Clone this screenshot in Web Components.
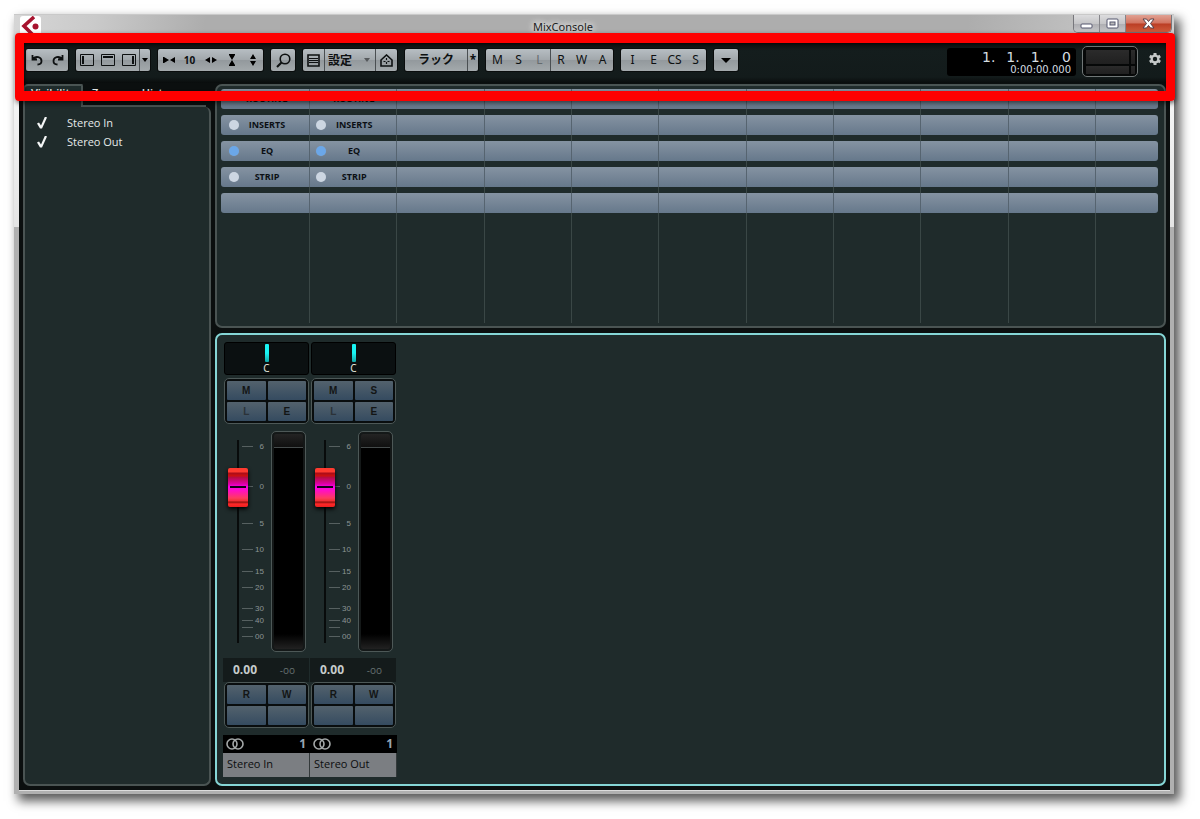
<!DOCTYPE html>
<html lang="ja">
<head>
<meta charset="utf-8">
<title>MixConsole</title>
<style>
  html, body { margin: 0; background: #fff; }
  body { font: 11px/16px "Open Sans", "Noto Sans", "Noto Sans CJK JP", sans-serif; color: #0c1012; }
</style>
</head>
<body>
<mix-console></mix-console>

<script>
const BASE = `
  *, *::before, *::after { box-sizing: border-box; }
  button, select, input { margin: 0; padding: 0; border: 0; border-radius: 0; background: none; color: inherit; font: inherit; appearance: none; }
  svg { display: block; flex: none; }
`;

function define(name, css, html) {
  customElements.define(name, class extends HTMLElement {
    connectedCallback() {
      if (this.shadowRoot) return;
      const markup = typeof html === 'function' ? html(this) : html;
      this.attachShadow({ mode: 'open' }).innerHTML = `<style>${BASE}${css}</style>${markup}`;
    }
  });
}

/* Window title bar */
define('title-bar', `
  :host { display: flex; align-items: flex-start; height: 29px; padding: 0 2px 0 6px; flex: none;
    background: linear-gradient(100deg, #d6d6d6 0, #cacaca 80px, #adadad 190px, #adadad 82%, #d0d0d0 100%);
    border-top: 1px solid #c9c9c9; }
  .logo { width: 21px; height: 19px; margin-top: 1px; background: #fff; border-radius: 3px; }
  h1 { flex: 1; margin: 0; padding-left: 12px; text-align: center; font: 11px/24px "Noto Sans", sans-serif; color: #1b1b1b;
    text-shadow: 0 0 6px #fff, 0 0 8px #fff; }
  .controls { display: flex; height: 18px; border: 1px solid #77777c; border-top: 0; border-radius: 0 0 5px 5px; overflow: hidden; }
  button { display: grid; place-items: center; width: 26px; background: linear-gradient(#dcdcde, #c6c6c8 50%, #adadb1 51%, #c6c6c8); border-right: 1px solid #85858a; }
  .close { width: 45px; border: 0; background: linear-gradient(#e0a193, #d2735f 48%, #bb3d24 52%, #cf5c3c); }
`, `
  <svg class="logo" viewBox="0 0 21 19"><path d="M14 1 4 10l9 9" fill="none" stroke="#a8142f" stroke-width="3.6"/><circle cx="15.500" cy="10.500" r="3" fill="#a8142f"/></svg>
  <h1>MixConsole</h1>
  <div class="controls">
    <button aria-label="Minimize"><svg width="13" height="14"><rect x="1" y="7" width="11" height="4" rx="1" fill="#fff" stroke="#55566e"/></svg></button>
    <button aria-label="Maximize"><svg width="13" height="12"><rect x="1" y="1" width="11" height="9" rx="1" fill="#fff" stroke="#55566e"/><rect x="4" y="4" width="5" height="3" fill="#bbb" stroke="#55566e"/></svg></button>
    <button class="close" aria-label="Close"><svg width="13" height="12"><path d="M1 1h3.500l2 2.500 2-2.500H12L8.500 5.500 12 10H8.500l-2-2.500-2 2.500H1l3.500-4.500z" fill="#fff" stroke="#55404a"/></svg></button>
  </div>
`);

/* Raised group of toolbar buttons */
define('tool-group', `
  :host { display: flex; height: 22px; flex: none; border-radius: 2px; overflow: hidden; color: #0d1011;
    background: linear-gradient(#b7bec3, #a1a7ab 50%, #93999d 52%, #a3a9ac); box-shadow: 0 0 0 1px #0a0d0d; }
  :host([letters]) { padding-left: 1px; }
`, `<slot></slot>`);

define('tool-button', `
  :host { display: flex; width: 21px; flex: none; }
  :host([wide]) { width: 62px; }
  :host([medium]) { width: 24px; }
  :host([slim]) { width: 11px; }
  :host([split]) { border-left: 1px solid #4a4f52; }
  :host([dim]) { color: #656b6e; }
  button { display: grid; place-items: center; flex: 1; min-width: 0; font: 12px/20px "Noto Sans", "Noto Sans CJK JP", sans-serif; white-space: nowrap; }
  :host([bold]) button { font-weight: 700; }
  :host([small]) button { font-size: 10px; }
`, `<button><slot></slot></button>`);

/* Preset drop-down */
define('preset-select', `
  :host { display: flex; align-items: center; width: 52px; padding: 0 5px 0 3px; border-left: 1px solid #4a4f52; border-right: 1px solid #4a4f52; }
  select { flex: 1; min-width: 0; height: 22px; font: 700 12px/20px "Noto Sans CJK JP", sans-serif; }
`, `<select aria-label="設定"><option>設定</option></select>
    <svg width="6" height="4"><path d="M0 0h6L3 4z" fill="#55595c"/></svg>`);

define('time-display', `
  :host { display: flex; flex-direction: column; align-items: flex-end; width: 129px; height: 28px; padding-right: 5px; border-radius: 3px;
    background: #000; color: #d5dde0; font: 14px/18px "DejaVu Sans", sans-serif; }
  .bars { display: flex; gap: 11px; height: 18px; }
  .bars span:last-child { margin-left: 7px; }
  .clock { font-size: 10px; line-height: 8px; }
`, `<div class="bars"><span>1.</span><span>1.</span><span>1.</span><span>0</span></div><div class="clock">0:00:00.000</div>`);

define('level-meter', `
  :host { display: grid; grid-template: 14px 8px / 43px 4px; gap: 2px; width: 56px; height: 31px; padding: 0 3px; align-content: center;
    border: 1px solid #707777; border-radius: 5px; background: #060808; }
  i { background: linear-gradient(#2b2b2b, #202020); }
`, `<i></i><i></i><i></i><i></i>`);

define('tool-bar', `
  :host { display: flex; align-items: flex-start; gap: 8px; height: 40px; padding: 6px 8px 0 7px; flex: none;
    background: linear-gradient(#0c1010, #141d1d 8px, #131b1b 34px, #090c0c); }
  time-display { margin: -1px -2px 0 auto; }
  level-meter { margin-top: -3px; }
  .gear { margin: 3px 0 0 2px; width: 14px; height: 14px; }
`, `
  <tool-group>
    <tool-button aria-label="Undo"><svg width="12" height="12" viewBox="0 0 12 12" fill="none" stroke="#0d1011" stroke-width="1.800"><path d="M1.500 1v4.500H6M2 5C5 1.500 10.500 3 10.500 7c0 2-1.500 3.500-4 3.500"/></svg></tool-button>
    <tool-button aria-label="Redo"><svg width="12" height="12" viewBox="0 0 12 12" fill="none" stroke="#0d1011" stroke-width="1.800"><path d="M10.500 1v4.500H6M10 5C7 1.500 1.500 3 1.500 7c0 2 1.500 3.500 4 3.500"/></svg></tool-button>
  </tool-group>
  <tool-group>
    <tool-button><svg width="14" height="12" fill="none" stroke="#0d1011"><path d="M.5.500h13v11H.5z"/><path d="M3 2v8" stroke-width="2"/></svg></tool-button>
    <tool-button><svg width="14" height="12" fill="none" stroke="#0d1011"><path d="M.5.500h13v11H.5z"/><path d="M2 3h10" stroke-width="2"/></svg></tool-button>
    <tool-button><svg width="14" height="12" fill="none" stroke="#0d1011"><path d="M.5.500h13v11H.5z"/><path d="M11 2v8" stroke-width="2"/></svg></tool-button>
    <tool-button slim split><svg width="6" height="4"><path d="M0 0h6L3 4z"/></svg></tool-button>
  </tool-group>
  <tool-group>
    <tool-button><svg width="12" height="8"><path d="M1 1v6l5-3zM12 1v6L7 4zM0 1h1v6H0z"/></svg></tool-button>
    <tool-button bold small>10</tool-button>
    <tool-button><svg width="12" height="8"><path d="M5 1v6L0 4zM7 1v6l5-3z"/></svg></tool-button>
    <tool-button><svg width="8" height="12"><path d="M1 0h6v1L4 6 1 1zM1 12h6v-1L4 6 1 11z"/></svg></tool-button>
    <tool-button><svg width="8" height="12"><path d="M1 5h6L4 0zM1 7h6l-3 5z"/></svg></tool-button>
  </tool-group>
  <tool-group>
    <tool-button medium aria-label="Find"><svg width="15" height="15" fill="none" stroke="#0d1011"><circle cx="9" cy="6" r="4.800" stroke-width="1.600"/><path d="M5.500 9.500 1 14" stroke-width="2.200"/></svg></tool-button>
  </tool-group>
  <tool-group>
    <tool-button><svg width="13" height="13" fill="none" stroke="#0d1011"><path d="M1 1h11v11H1z" stroke-width="1.600"/><path d="M2 4.500h9M2 6.500h9M2 8.500h9"/></svg></tool-button>
    <preset-select></preset-select>
    <tool-button><svg width="13" height="13" fill="none" stroke="#0d1011"><path d="M1 12V6l5.500-5L12 6v6z" stroke-width="1.600"/><path d="M6.500 4v2M6.500 8v2M3.500 7.500h2M7.500 7.500h2" stroke-width="1.200"/></svg></tool-button>
  </tool-group>
  <tool-group>
    <tool-button wide bold>ラック</tool-button>
    <tool-button slim split bold>*</tool-button>
  </tool-group>
  <tool-group letters>
    <tool-button>M</tool-button><tool-button>S</tool-button><tool-button dim>L</tool-button>
    <tool-button split>R</tool-button><tool-button>W</tool-button><tool-button>A</tool-button>
  </tool-group>
  <tool-group letters>
    <tool-button>I</tool-button><tool-button>E</tool-button><tool-button>CS</tool-button><tool-button>S</tool-button>
  </tool-group>
  <tool-group>
    <tool-button medium><svg width="10" height="5"><path d="M0 0h10L5 5z"/></svg></tool-button>
  </tool-group>
  <time-display></time-display>
  <level-meter></level-meter>
  <svg class="gear" viewBox="0 0 14 14"><g stroke="#c4c8c8" stroke-width="3"><path d="M7 1v12M1.800 4l10.400 6M12.200 4 1.800 10"/></g><circle cx="7" cy="7" r="4.500" fill="#c4c8c8"/><circle cx="7" cy="7" r="2.200" fill="#131b1b"/></svg>
`);

/* Channel list */
define('check-item', `
  :host { display: block; }
  label { display: flex; align-items: center; gap: 20px; height: 19px; padding-left: 12px; color: #e6eaea; }
  input { width: 10px; height: 12px; background: #f4f6f6; clip-path: path("M0 7 2 6 4 9 8 0 10 1 5 12 3 12Z"); }
`, `<label><input type="checkbox" checked><slot></slot></label>`);

define('side-panel', `
  :host { display: flex; flex-direction: column; min-width: 0; }
  nav { display: flex; align-items: flex-start; height: 23px; margin-bottom: -2px; color: #e6eaea; }
  nav button { height: 23px; padding: 0 9px 6px; line-height: 17px; font-weight: 600; }
  nav .on { width: 60px; padding: 0 0 8px 6px; line-height: 13px; text-align: left; background: #1f2b2b; border: 2px solid #4a5453; border-bottom: 0; border-radius: 5px 2px 0 0; overflow: hidden; }
  section { flex: 1; padding-top: 6px; background: #1f2b2b; border: 2px solid #4a5453; border-top: 0; border-radius: 0 6px 7px 7px; }
  .edge { height: 2px; margin: 0 5px 0 60px; background: #4a5453; }
`, `
  <nav><button class="on">Visibility</button><button>Zones</button><button>History</button></nav>
  <div class="edge"></div>
  <section><check-item>Stereo In</check-item><check-item>Stereo Out</check-item></section>
`);

/* One cell of a rack row */
define('rack-cell', `
  :host { display: flex; align-items: center; height: 20px; padding-left: 6px; color: #0b0f14; background: linear-gradient(#8593a2, #66788b); border-right: 1px solid #566470; }
  i { width: 10px; height: 10px; border-radius: 5px; background: #ccd6e2; box-shadow: 0 0 1px #8796a6; }
  :host([lit]) i { background: #6ba7e8; }
  :host([plain]) i { visibility: hidden; }
  span { flex: 1; padding-right: 14px; text-align: center; font: 700 9px/20px "Open Sans", "Noto Sans", sans-serif; }
`, host => host.hasAttribute('label') ? `<i></i><span>${host.getAttribute('label')}</span>` : '');

define('rack-panel', `
  :host { display: grid; grid-template-columns: 890fr repeat(9, 873fr) 620fr; height: 244px; flex: none; padding: 3px 6px 3px 4px;
    background: #1f2b2b; border: 2px solid #4a5453; border-radius: 7px; }
  .col { display: flex; flex-direction: column; gap: 6px; min-width: 0; background: linear-gradient(#3a4746, #3a4746) right / 1px 100% no-repeat; }
  .col:last-of-type { background: none; }
  .col:first-of-type rack-cell { padding-left: 8px; border-radius: 3px 0 0 3px; }
  .col:last-of-type rack-cell { border-right: 0; border-radius: 0 3px 3px 0; }
`, () => {
  const full = `<div class="col"><rack-cell plain label="ROUTING"></rack-cell><rack-cell label="INSERTS"></rack-cell><rack-cell lit label="EQ"></rack-cell><rack-cell label="STRIP"></rack-cell><rack-cell></rack-cell></div>`;
  const empty = `<div class="col">${'<rack-cell></rack-cell>'.repeat(5)}</div>`;
  return full.repeat(2) + empty.repeat(9);
});

/* 2 x 2 block of channel buttons */
define('button-block', `
  :host { display: grid; grid-template: 19px 19px / 1fr 1fr; gap: 2px; height: 46px; margin: 0 1px; padding: 2px; border: 1px solid #4d5857; border-radius: 5px; background: #090d0e; }
  button { background: linear-gradient(#53626d, #354b60); color: #131515; font: 700 10px/19px "Liberation Sans", sans-serif; border-radius: 1px; }
  .dim { color: #2b3238; }
`, host => host.getAttribute('labels').split(',').slice(0, 4).map(t => `<button${t === 'L' ? ' class="dim"' : ''}>${t}</button>`).join(''));

define('channel-fader', `
  :host { display: flex; height: 221px; margin-right: 4px; padding-left: 5px; }
  input { position: relative; z-index: 1; width: 20px; height: 203px; margin-top: 9px; writing-mode: vertical-lr; direction: rtl;
    background: linear-gradient(#080b0b, #080b0b) center / 2px 100% no-repeat; }
  input::-webkit-slider-thumb { appearance: none; width: 20px; height: 39px; border-radius: 2px; box-shadow: 0 2px 4px #000;
    background: linear-gradient(#180018, #180018) center / 16px 2px no-repeat,
      linear-gradient(#ff3b30 0, #ff3b30 4px, #a80c18 5px, #d01010 8px, #b30d3c 9px, #e000a8 16px, #ff00f0 19px, #ff18b0 24px, #ff3a60 30px, #f03030 33px, #8c1010 34px, #ff2828 36px, #e82020 39px); }
  svg { margin-left: -7px; }
  text { font: 8px "Liberation Sans", sans-serif; fill: #8c9595; text-anchor: end; }
  .meter { width: 35px; height: 221px; margin-left: auto; border: 1px solid #4d5857; border-radius: 5px; padding: 1px;
    background: linear-gradient(#262626, #101010 15px, #454b4b 15px, #454b4b 16px, #000 16px, #000 202px, #262626) padding-box; box-shadow: inset 0 0 0 2px #141818; }
`, host => {
  const ticks = [[15, '6'], [55, '0'], [92, '5'], [118, '10'], [140, '15'], [156, '20'], [177, '30'], [189, '40'], [196, ''], [205, '00']];
  return `<input type="range" min="0" max="100" value="83" aria-label="${host.getAttribute('label')}">
    <svg width="26" height="221">${ticks.map(([y, t]) => `<path d="M1 ${y}.500h11" stroke="#566060"/><text x="23" y="${y + 3}">${t}</text>`).join('')}</svg>
    <div class="meter"></div>`;
});

define('channel-strip', `
  :host { display: flex; flex-direction: column; width: 87px; }
  .pan { display: flex; flex-direction: column; align-items: center; height: 33px; margin: 0 1px 3px; background: #0b1011; border: 1px solid #000; border-radius: 3px; color: #e4e4dc; font: 10px/12px "Noto Sans", sans-serif; }
  .pan i { width: 4px; height: 18px; margin-top: 1px; border-radius: 1px; background: linear-gradient(#19f3f3 50%, #13a8a8); }
  channel-fader { margin-top: 7px; margin-bottom: 6px; }
  .readout { display: flex; justify-content: space-between; height: 24px; padding: 0 14px 0 10px; background: #141b1b; border-right: 1px solid #1f2b2b; color: #c6cccc; font-size: 12px; line-height: 24px; }
  .readout span { color: #667070; font-size: 10px; }
  .number { display: flex; justify-content: space-between; align-items: center; height: 18px; margin-top: 7px; padding: 0 4px 0 3px; background: #000; color: #98a6b6; font-size: 12px; }
  .name { height: 24px; padding-left: 4px; background: #7b7e82; border-right: 1px solid #33393a; line-height: 22px; color: #0b0d0e; }
`, host => `
  <div class="pan"><i></i><span>C</span></div>
  <button-block labels="${host.getAttribute('keys')}"></button-block>
  <channel-fader label="${host.getAttribute('name')}"></channel-fader>
  <div class="readout"><b>0.00</b><span>-oo</span></div>
  <button-block labels="R,W,,"></button-block>
  <div class="number"><svg width="18" height="12" fill="none" stroke="#a4a8a8" stroke-width="1.600"><circle cx="6" cy="6" r="5"/><circle cx="12" cy="6" r="5"/></svg><b>1</b></div>
  <div class="name">${host.getAttribute('name')}</div>
`);

define('mixer-panel', `
  :host { display: flex; flex: 1; padding: 7px 6px; background: #1f2b2b; border: 2px solid #85d6d6; border-radius: 7px; }
`, `<channel-strip name="Stereo In" keys="M,,L,E"></channel-strip><channel-strip name="Stereo Out" keys="M,S,L,E"></channel-strip>`);

/* Highlight drawn round the toolbar */
define('callout-frame', `
  :host { display: block; position: absolute; z-index: 5; top: 19px; left: 1px; right: -1px; height: 68px; border: solid #fe0000; border-width: 10px 9px; border-radius: 4px; box-sizing: border-box;
    box-shadow: 1px 2px 5px rgba(0,0,0,.6), inset 1px 1px 3px rgba(0,0,0,.6); pointer-events: none; }
`, '');

define('mix-console', `
  :host { display: flex; flex-direction: column; position: relative; min-height: calc(100vh - 40px); margin: 14px 26px 26px 14px;
    background: linear-gradient(#c8c8c8 0, #f4f4f4 90px, #e4e4e4 213px, #b0b0b0 213px); box-shadow: 5px 6px 10px 1px rgba(0,0,0,.65); }
  main { display: flex; flex-direction: column; flex: 1; margin: 0 4px 4px 5px; background: #0b0f0f; box-shadow: 0 1px 0 #dcdcdc; }
  .work { display: grid; grid-template-columns: 188px 1fr; gap: 4px; flex: 1; padding: 1px 4px 4px; }
  .right { display: flex; flex-direction: column; gap: 5px; min-width: 0; }
`, `
  <title-bar></title-bar>
  <main>
    <tool-bar></tool-bar>
    <div class="work">
      <side-panel></side-panel>
      <div class="right"><rack-panel></rack-panel><mixer-panel></mixer-panel></div>
    </div>
  </main>
  <callout-frame></callout-frame>
`);
</script>
</body>
</html>
